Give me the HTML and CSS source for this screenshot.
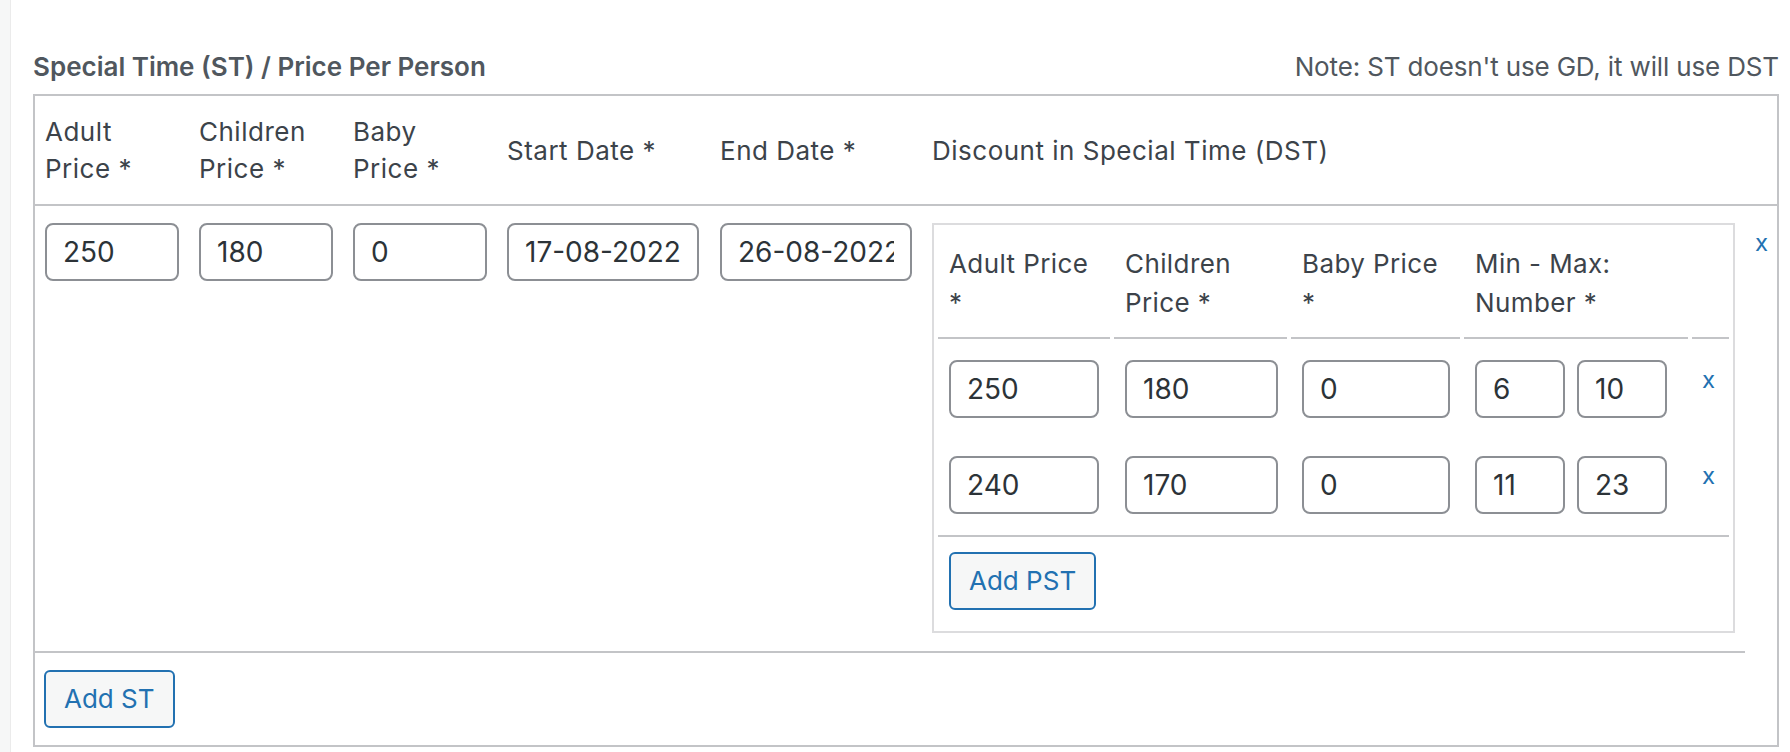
FILE: index.html
```html
<!DOCTYPE html>
<html lang="en">
<head>
<meta charset="utf-8">
<title>Special Time (ST) / Price Per Person</title>
<link rel="stylesheet" href="styles.css">
</head>
<body>
<div class="page">
  <aside class="strip"></aside>
  <main class="content">
    <div class="section-head">
      <h4 class="section-title">Special Time (ST) / Price Per Person</h4>
      <span class="note">Note: ST doesn't use GD, it will use DST</span>
    </div>
    <table class="st-table">
      <thead>
        <tr>
          <th class="w-price">Adult Price *</th>
          <th class="w-price">Children Price *</th>
          <th class="w-price">Baby Price *</th>
          <th class="w-date4">Start Date *</th>
          <th class="w-date5">End Date *</th>
          <th class="w-dst">Discount in Special Time (DST)</th>
          <th class="w-rm"></th>
        </tr>
      </thead>
      <tbody>
        <tr>
          <td><input class="inp inp-price" type="text" value="250"></td>
          <td><input class="inp inp-price" type="text" value="180"></td>
          <td><input class="inp inp-price" type="text" value="0"></td>
          <td><input class="inp inp-date" type="text" value="17-08-2022"></td>
          <td><input class="inp inp-date" type="text" value="26-08-2022"></td>
          <td class="c-dst">
            <div class="dst-box">
              <table class="dst-table">
                <thead>
                  <tr>
                    <th class="d-adult">Adult Price *</th>
                    <th class="d-child">Children Price *</th>
                    <th class="d-baby">Baby Price *</th>
                    <th class="d-range">Min - Max: Number *</th>
                    <th class="d-rm"></th>
                  </tr>
                </thead>
                <tbody>
                  <tr>
                    <td><input class="inp inp-d-adult" type="text" value="250"></td>
                    <td><input class="inp inp-d-child" type="text" value="180"></td>
                    <td><input class="inp inp-d-baby" type="text" value="0"></td>
                    <td><div class="range"><input class="inp inp-num" type="text" value="6"><input class="inp inp-num" type="text" value="10"></div></td>
                    <td class="c-rm"><a class="rm" href="#">x</a></td>
                  </tr>
                  <tr>
                    <td><input class="inp inp-d-adult" type="text" value="240"></td>
                    <td><input class="inp inp-d-child" type="text" value="170"></td>
                    <td><input class="inp inp-d-baby" type="text" value="0"></td>
                    <td><div class="range"><input class="inp inp-num" type="text" value="11"><input class="inp inp-num" type="text" value="23"></div></td>
                    <td class="c-rm"><a class="rm" href="#">x</a></td>
                  </tr>
                </tbody>
                <tfoot>
                  <tr>
                    <td colspan="5" class="dst-foot"><button class="btn" type="button">Add PST</button></td>
                  </tr>
                </tfoot>
              </table>
            </div>
          </td>
          <td class="c-rm"><a class="rm" href="#">x</a></td>
        </tr>
      </tbody>
      <tfoot>
        <tr>
          <td colspan="7" class="st-foot"><button class="btn" type="button">Add ST</button></td>
        </tr>
      </tfoot>
    </table>
  </main>
</div>
</body>
</html>
```

FILE: styles.css
```css
* { box-sizing: border-box; }

html, body {
  margin: 0;
  padding: 0;
  background: #ffffff;
}

body {
  font-family: Inter, "Liberation Sans", sans-serif;
  color: #2c3338;
}

.page {
  display: flex;
  min-height: 752px;
}

.strip {
  flex: none;
  width: 11px;
  background: #f6f7f7;
  border-right: 1px solid #ebebeb;
}

.content {
  flex: 1;
  min-width: 0;
  padding: 50px 11px 0 22px;
}

.section-head {
  display: flex;
  justify-content: space-between;
  align-items: center;
  height: 34px;
  margin-bottom: 10px;
}

.section-title {
  margin: 0;
  font-size: 26px;
  font-weight: 600;
  line-height: 34px;
  color: #50575e;
}

.note {
  font-size: 26px;
  line-height: 34px;
  letter-spacing: -0.15px;
  color: #50575e;
}

/* outer table */
.st-table {
  width: 100%;
  table-layout: fixed;
  border-collapse: separate;
  border-spacing: 0;
  border: 2px solid #c3c4c7;
}

.st-table > thead > tr > th {
  text-align: left;
  font-weight: 400;
  font-size: 26px;
  line-height: 37px;
  letter-spacing: 0.5px;
  color: #3c434a;
  padding: 17px 10px;
  border-bottom: 2px solid #c3c4c7;
  vertical-align: middle;
}

.st-table > thead > tr > th.w-price {
  width: 154px;
  padding-right: 22px;
}

.w-date4 { width: 213px; }
.w-date5 { width: 212px; }
.w-rm { width: 32px; }

.st-table > tbody > tr > td {
  padding: 17px 10px 18px;
  vertical-align: top;
  border-bottom: 2px solid #c3c4c7;
}

.st-table > tbody > tr > td.c-rm {
  border-bottom: 0;
}

.st-foot {
  padding: 17px 9px;
}

/* inputs */
.inp {
  display: block;
  height: 58px;
  margin: 0;
  padding: 0 16px;
  border: 2px solid #8c8f94;
  border-radius: 8px;
  background: #ffffff;
  font-family: Inter, "Liberation Sans", sans-serif;
  font-size: 28px;
  color: #2c3338;
  outline: none;
}

.inp-price { width: 134px; }
.inp-date { width: 192px; }
.inp-d-adult { width: 150px; }
.inp-d-child { width: 153px; }
.inp-d-baby { width: 148px; }
.inp-num { width: 90px; }

.range {
  display: flex;
  gap: 12px;
}

/* nested DST box */
.dst-box {
  border: 2px solid #dcdcde;
}

.dst-table {
  width: 100%;
  table-layout: fixed;
  border-collapse: separate;
  border-spacing: 4px;
}

.dst-table th {
  text-align: left;
  font-weight: 400;
  font-size: 26px;
  line-height: 39px;
  letter-spacing: 0.4px;
  color: #3c434a;
  padding: 15px 10px 15px 11px;
  border-bottom: 2px solid #c3c4c7;
  vertical-align: top;
}

.d-adult { width: 172px; }
.d-child { width: 173px; }
.d-baby { width: 169px; }
.d-range { width: 224px; }

.dst-table td {
  padding: 17px 10px 17px 11px;
  vertical-align: top;
}

.dst-table td.dst-foot {
  border-top: 2px solid #c3c4c7;
  padding: 15px 10px 17px 11px;
}

.c-rm {
  padding-left: 10px;
}

.dst-table td.c-rm {
  padding-left: 10px;
}

.rm {
  display: block;
  font-size: 24px;
  line-height: 39px;
  color: #2271b1;
  text-decoration: none;
}

/* buttons */
.btn {
  display: inline-block;
  height: 58px;
  margin: 0;
  padding: 0 18px;
  border: 2px solid #2271b1;
  border-radius: 6px;
  background: #f6f7f7;
  color: #2271b1;
  font-family: Inter, "Liberation Sans", sans-serif;
  font-size: 26px;
  line-height: 54px;
  vertical-align: top;
  cursor: pointer;
}
```
